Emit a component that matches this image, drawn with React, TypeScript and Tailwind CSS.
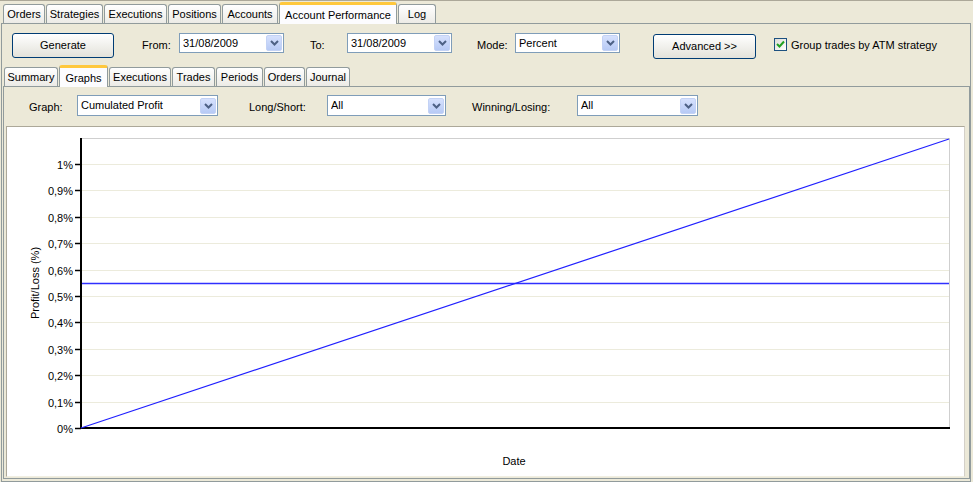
import React from 'react';

const FONT = { fontFamily: '"Liberation Sans", Arial, sans-serif' };

function TopTab({ label, w, active }: { label: string; w: string; active?: boolean }) {
  if (active) {
    return (
      <div
        className={`${w} h-[22px] -mb-px relative z-10 flex items-start justify-center pt-[2px] bg-[#FCFCFE] border-x border-[#919B9C] border-t-[3px] border-t-[#FFC83C] rounded-t-[3px] text-[11px]`}
      >
        {label}
      </div>
    );
  }
  return (
    <div
      className={`${w} h-[19px] flex items-center justify-center border border-b-0 border-[#919B9C] rounded-t-[3px] bg-linear-to-b from-white to-[#ECEBE6] text-[11px]`}
    >
      {label}
    </div>
  );
}

function Chevron() {
  return (
    <svg width="9" height="6" viewBox="0 0 9 6">
      <path d="M1 1 L4.5 4.5 L8 1" fill="none" stroke="#4D6185" strokeWidth="2" />
    </svg>
  );
}

function Combo({ value, w, h = 'h-[20px]' }: { value: string; w: string; h?: string }) {
  return (
    <div className={`${w} ${h} flex items-center bg-white border border-[#7F9DB9] pl-[3px] pr-px text-[11px]`}>
      <span className="flex-1 truncate">{value}</span>
      <span className="w-[16px] h-[16px] flex items-center justify-center rounded-[2px] border border-[#C3D2F5] bg-linear-to-b from-[#D6E1FD] to-[#B7CAF5]">
        <Chevron />
      </span>
    </div>
  );
}

function XPButton({ label, w, className = '' }: { label: string; w: string; className?: string }) {
  return (
    <button
      className={`${w} h-[25px] rounded-[3px] border border-[#003C74] bg-linear-to-b from-white to-[#E3E2DA] text-[11px] ${className}`}
    >
      {label}
    </button>
  );
}

function Chart() {
  const ticks = [0, 0.1, 0.2, 0.3, 0.4, 0.5, 0.6, 0.7, 0.8, 0.9, 1];
  const yOf = (v: number) => Math.round(429 - v * 264) + 0.5;
  const labelOf = (v: number) =>
    v === 0 ? '0%' : v === 1 ? '1%' : `0,${Math.round(v * 10)}%`;
  return (
    <svg width="957" height="349" viewBox="8 128 957 349" style={FONT}>
      <rect x="8" y="128" width="957" height="349" fill="#fff" />
      {ticks.slice(1).map((v) => (
        <line key={v} x1="83" x2="950" y1={yOf(v)} y2={yOf(v)} stroke="#ECEBDC" />
      ))}
      <line x1="82" x2="950.5" y1="139.5" y2="139.5" stroke="#CFCFCF" />
      <line x1="950.5" x2="950.5" y1="139" y2="429" stroke="#CFCFCF" />
      {ticks.map((v) => (
        <g key={v}>
          <line x1="76" x2="82" y1={yOf(v)} y2={yOf(v)} stroke="#000" strokeWidth="1.5" />
          <text x="74" y={yOf(v) + 4} textAnchor="end" fontSize="11" fill="#000">
            {labelOf(v)}
          </text>
        </g>
      ))}
      <line x1="82" x2="82" y1="139" y2="430" stroke="#000" strokeWidth="2" />
      <line x1="81" x2="951" y1="429" y2="429" stroke="#000" strokeWidth="2" />
      <line x1="83" x2="950" y1="284.5" y2="284.5" stroke="#3030FF" strokeWidth="1.4" />
      <line x1="82" x2="950" y1="429" y2="140" stroke="#2020FF" strokeWidth="1.2" />
      <text x="515" y="466" textAnchor="middle" fontSize="11" fill="#000">
        Date
      </text>
      <text
        x="0"
        y="0"
        textAnchor="middle"
        fontSize="11"
        fill="#000"
        transform="translate(40 284) rotate(-90)"
      >
        Profit/Loss (%)
      </text>
    </svg>
  );
}

export default function App() {
  return (
    <div className="w-[973px] h-[482px] overflow-hidden bg-[#ECE9D8] text-black flex flex-col" style={FONT}>
      {/* top edge */}
      <div className="h-[2px] border-t border-[#ACA899]" />

      {/* main tabs */}
      <div className="h-[21px] flex items-end pl-[3px] gap-[1px]">
        <TopTab label="Orders" w="w-[42px]" />
        <TopTab label="Strategies" w="w-[57px]" />
        <TopTab label="Executions" w="w-[63px]" />
        <TopTab label="Positions" w="w-[53px]" />
        <TopTab label="Accounts" w="w-[56px]" />
        <TopTab label="Account Performance" w="w-[118px]" active />
        <TopTab label="Log" w="w-[38px]" />
      </div>

      {/* account performance page */}
      <div className="ml-px w-[970px] flex-1 border border-[#919B9C] flex flex-col">
        {/* toolbar */}
        <div className="h-[41px] flex items-start pt-[9px]">
          <XPButton label="Generate" w="w-[102px]" className="ml-[10px]" />
          <span className="ml-[28px] w-[37px] mt-[4px] text-[11px]">From:</span>
          <Combo value="31/08/2009" w="w-[105px]" />
          <span className="ml-[26px] w-[37px] mt-[4px] text-[11px]">To:</span>
          <Combo value="31/08/2009" w="w-[105px]" />
          <span className="ml-[25px] w-[38px] mt-[4px] text-[11px]">Mode:</span>
          <Combo value="Percent" w="w-[105px]" />
          <XPButton label="Advanced >>" w="w-[103px]" className="ml-[33px] mt-px" />
          <span className="ml-[18px] mt-[5px] w-[13px] h-[13px] flex items-center justify-center border border-[#1C5180] bg-linear-to-br from-[#DCDCD7] to-white">
            <svg width="9" height="9" viewBox="0 0 9 9">
              <path d="M1 4 L3.5 6.5 L8 1.5" fill="none" stroke="#21A121" strokeWidth="2" />
            </svg>
          </span>
          <span className="ml-[4px] mt-[4px] text-[11px]">Group trades by ATM strategy</span>
        </div>

        {/* sub tabs */}
        <div className="h-[21px] flex items-end pl-[2px] gap-[1px]">
          <TopTab label="Summary" w="w-[54px]" />
          <TopTab label="Graphs" w="w-[49px]" active />
          <TopTab label="Executions" w="w-[62px]" />
          <TopTab label="Trades" w="w-[43px]" />
          <TopTab label="Periods" w="w-[47px]" />
          <TopTab label="Orders" w="w-[41px]" />
          <TopTab label="Journal" w="w-[44px]" />
        </div>

        {/* graphs page */}
        <div className="ml-px w-[967px] h-[393px] border border-[#919B9C] flex flex-col">
          <div className="h-[39px] flex items-start pt-[8px] pl-[25px]">
            <span className="w-[48px] mt-[4px] text-[11px]">Graph:</span>
            <Combo value="Cumulated Profit" w="w-[141px]" h="h-[21px]" />
            <span className="ml-[31px] w-[78px] mt-[4px] text-[11px]">Long/Short:</span>
            <Combo value="All" w="w-[119px]" h="h-[21px]" />
            <span className="ml-[26px] w-[105px] mt-[4px] text-[11px]">Winning/Losing:</span>
            <Combo value="All" w="w-[121px]" h="h-[21px]" />
          </div>
          <div className="ml-[2px] w-[959px] h-[351px] border border-t-[#ACA899] border-l-[#ACA899] border-r-[#D4D0C8] border-b-[#F1EFE2] bg-white">
            <Chart />
          </div>
        </div>
      </div>
    </div>
  );
}
